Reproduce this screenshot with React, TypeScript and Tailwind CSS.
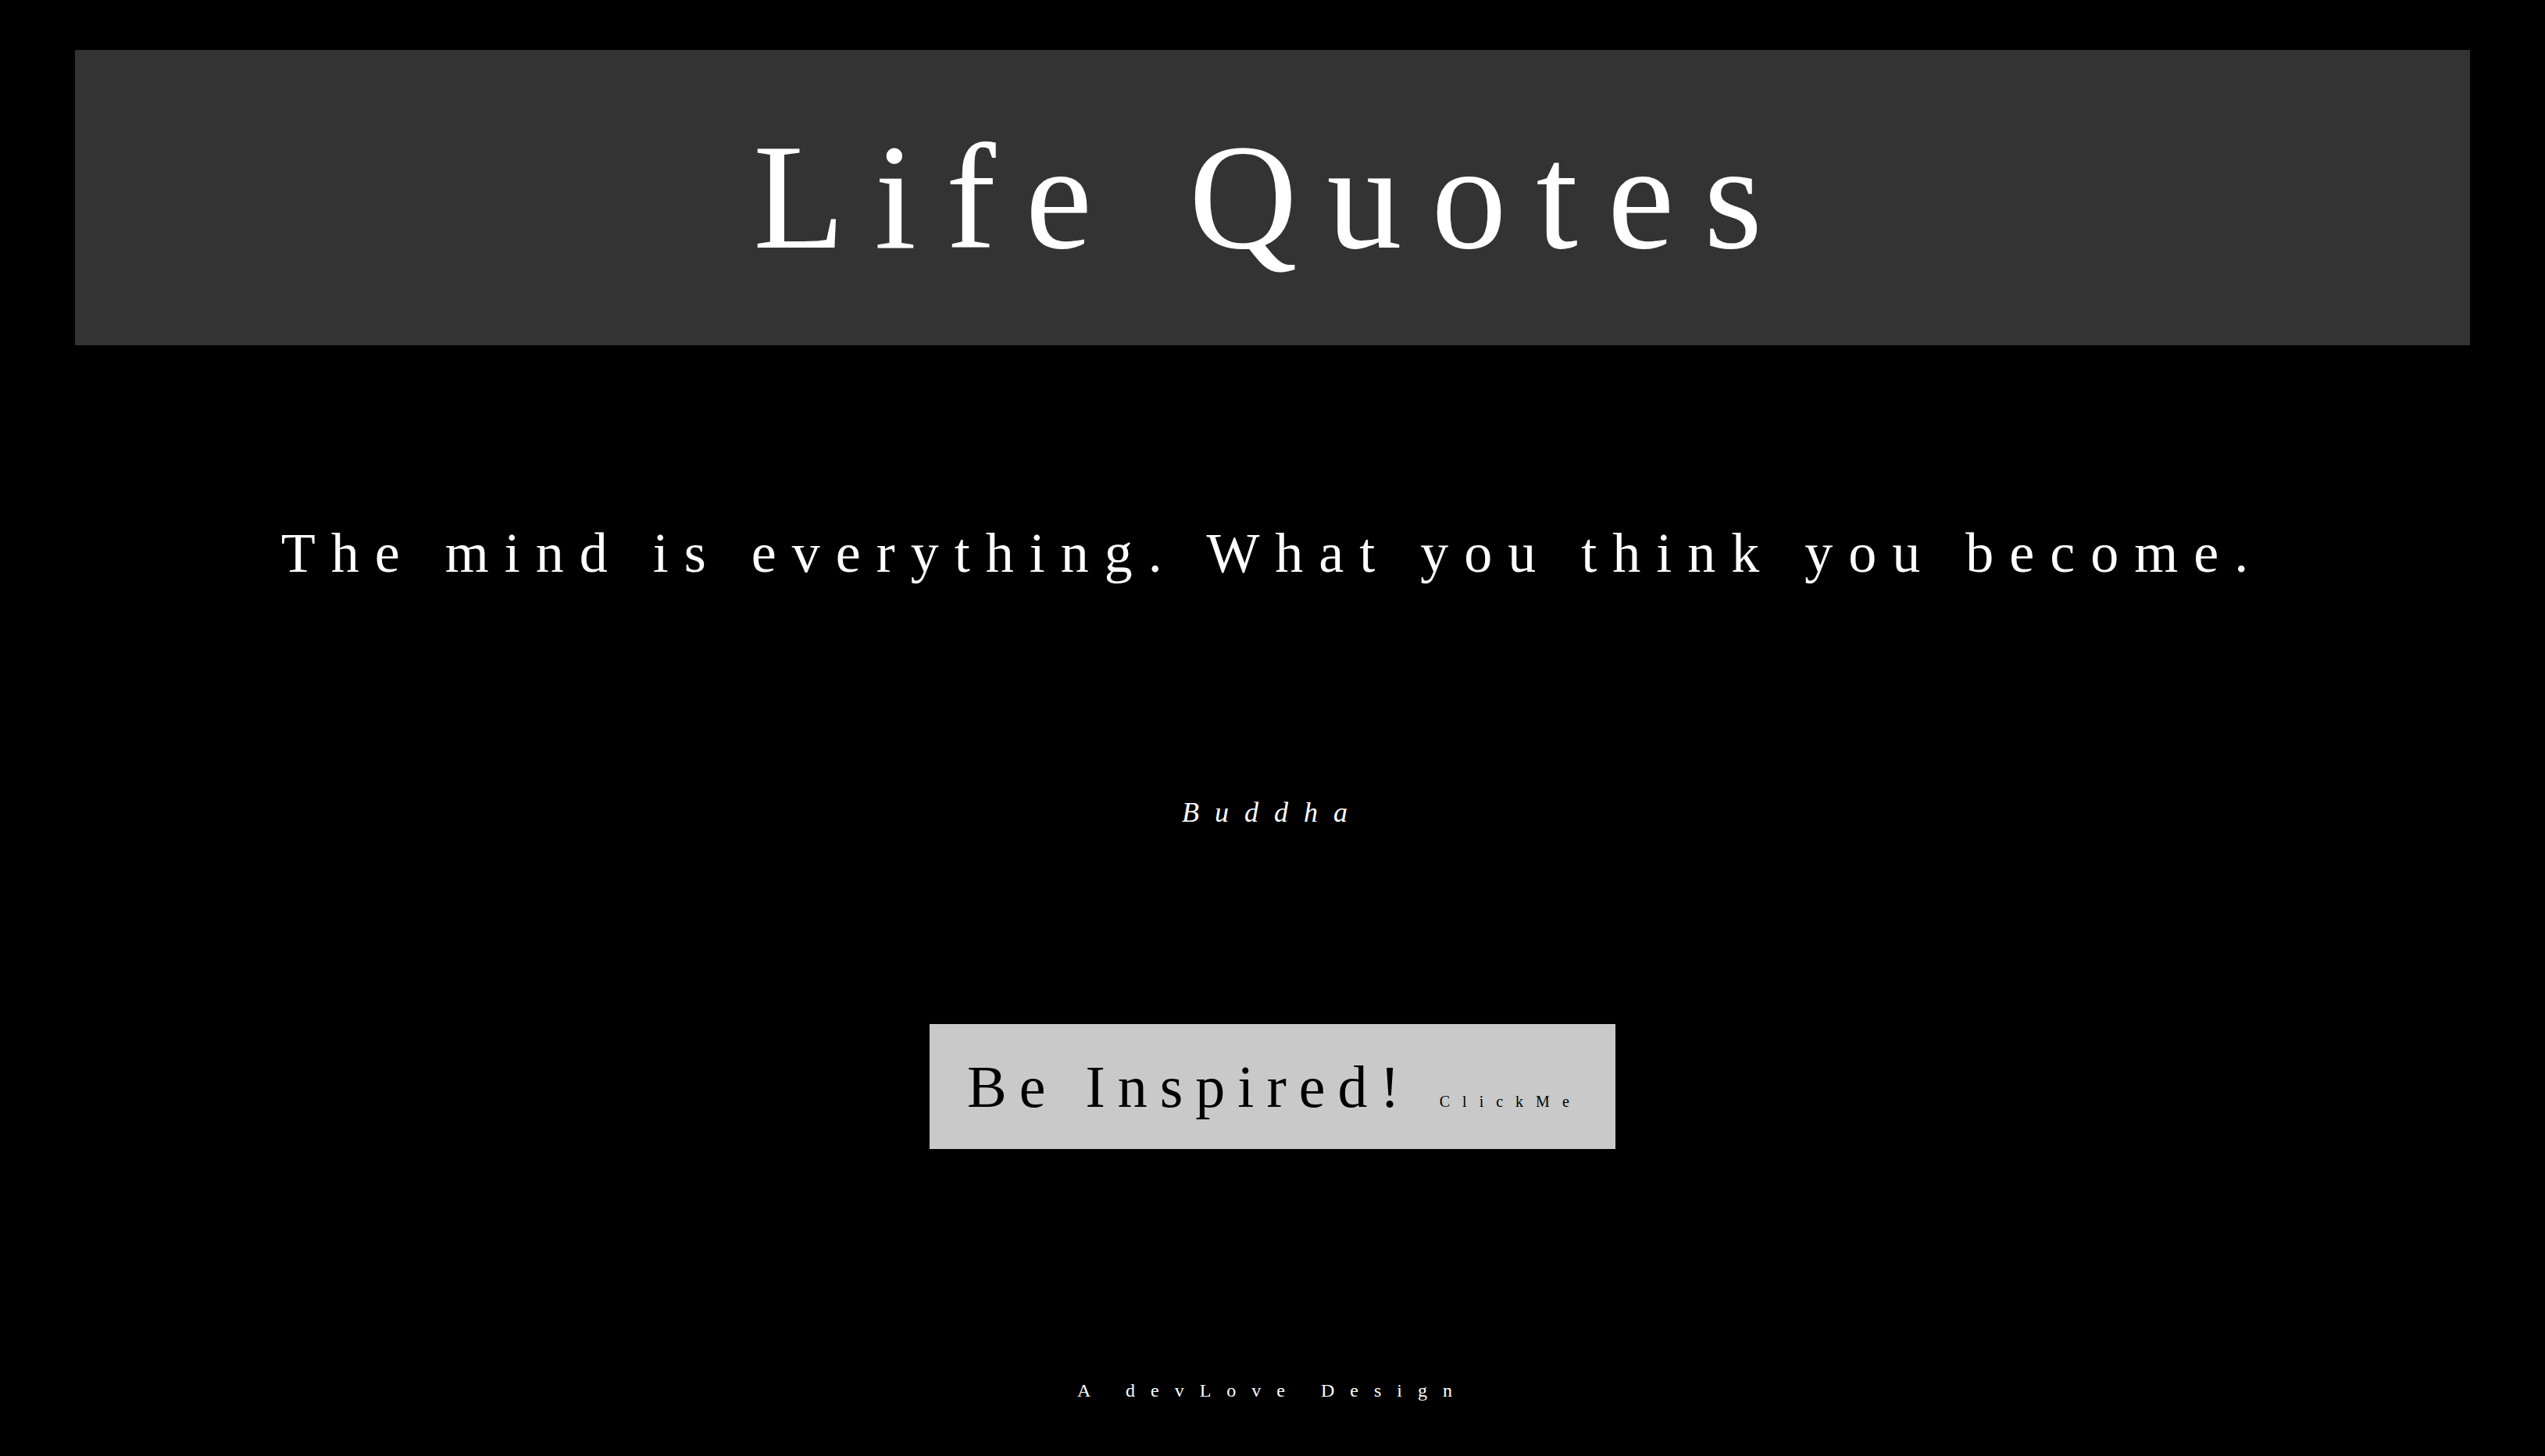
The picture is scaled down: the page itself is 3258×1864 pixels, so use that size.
const App = () => {
  return (
    <div className="min-h-screen bg-black pt-[64px] font-[family-name:Liberation_Serif,Times_New_Roman,serif] text-white">
      <header className="mx-[96px] flex h-[378px] items-center justify-center bg-[#333333]">
        <h1 className="text-[192px] font-normal leading-normal tracking-[38px]">Life Quotes</h1>
      </header>

      <main className="flex flex-col items-center">
        <p className="mt-[212px] text-[72px] leading-normal tracking-[20px]">
          The mind is everything. What you think you become.
        </p>
        <p className="mt-[251px] text-[36px] italic leading-normal tracking-[20px]">Buddha</p>
        <button className="mt-[244px] h-[160px] w-[878px] bg-[#c9c9c9] pl-[48px] text-left font-[family-name:Liberation_Serif,Times_New_Roman,serif] leading-normal text-black">
          <span className="text-[76px] tracking-[16px]">Be Inspired! </span>
          <span className="text-[20px] tracking-[16px]">ClickMe</span>
        </button>
      </main>

      <footer className="mt-[291px] pb-[70px] text-center text-[24px] leading-normal tracking-[20px]">
        A devLove Design
      </footer>
    </div>
  );
};

export default App;
